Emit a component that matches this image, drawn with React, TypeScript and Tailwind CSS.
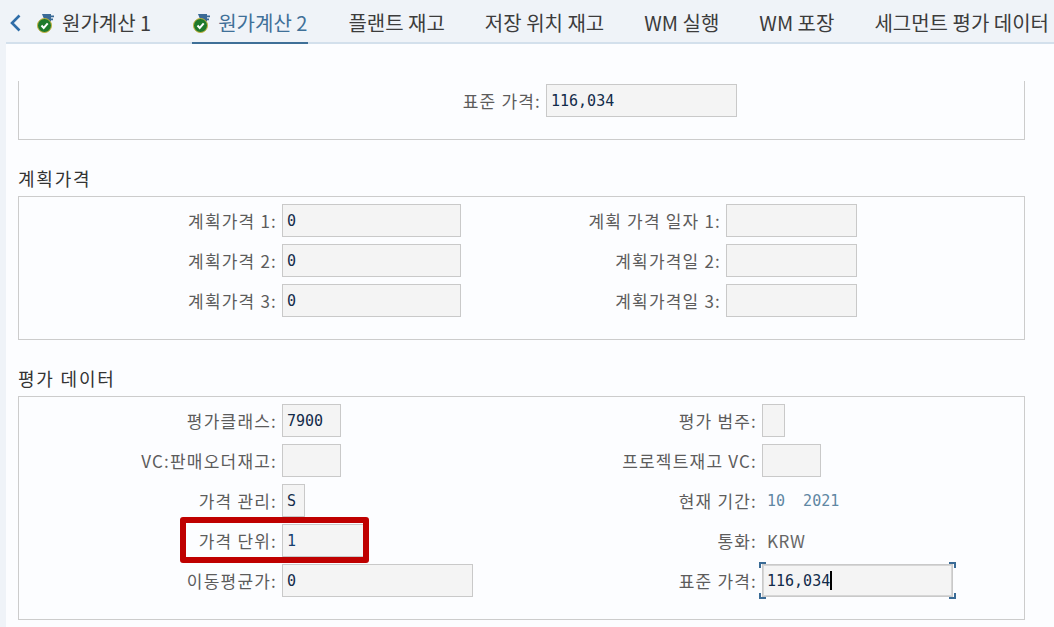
const kr = "font-['Noto_Sans_CJK_KR','Noto_Sans',sans-serif]"
const mono = "font-['DejaVu_Sans_Mono',monospace]"

function TabIcon() {
  return (
    <svg width="18" height="20" viewBox="0 0 18 20" className="shrink-0">
      <path d="M5 1h9v1.6h3v1.6h-3v1.4h2v1.6h-2v1.4H8z" fill="#3a6a96" />
      <circle cx="7.5" cy="12.5" r="7" fill="#1f7a2c" stroke="#c9b23c" strokeWidth="1" />
      <path d="M4.5 12.5l2.2 2.4 4-4.6" fill="none" stroke="#fff" strokeWidth="2" />
    </svg>
  )
}

function Tab({ label, icon, active }: { label: string; icon?: boolean; active?: boolean }) {
  return (
    <div
      className={`flex h-[44px] shrink-0 items-center gap-[7px] whitespace-nowrap border-b-[2px] pt-[3px] text-[20px] ${
        active ? "ml-[1px] border-[#3f7098] px-[1px] text-[#3f7098]" : "border-transparent text-[#3c3c3c]"
      }`}
    >
      {icon && <TabIcon />}
      <span>{label}</span>
    </div>
  )
}

function Field({ value, width, faint, focused }: { value?: string; width: string; faint?: boolean; focused?: boolean }) {
  return (
    <div
      className={`flex h-[33px] items-center border border-[#c9c9c9] bg-[#f4f4f4] pl-[4px] pt-[1px] text-[15px] ${mono} ${width} ${
        faint ? "text-[#16406f]" : "text-[#122b4a]"
      } ${focused ? "inset-ring inset-ring-[#d6d6d6]" : ""}`}
    >
      {value}
    </div>
  )
}

function Label({ text, width }: { text: string; width: string }) {
  return (
    <div
      className={`shrink-0 whitespace-nowrap pr-[5px] text-right text-[17px] tracking-[1.2px] text-[#5c5c5c] ${width}`}
    >
      {text}
    </div>
  )
}

function Section({ title, children, height }: { title: string; children: React.ReactNode; height: string }) {
  return (
    <div className="mt-[25px]">
      <div className="h-[31px] text-[18px] leading-[26px] tracking-[1.8px] text-[#333333]">{title}</div>
      <div className={`flex flex-col gap-[7px] border border-[#cccccc] pt-[7px] ${height}`}>{children}</div>
    </div>
  )
}

function PlanRow({ n, dateLabel }: { n: number; dateLabel: string }) {
  return (
    <div className="flex h-[33px] items-center">
      <Label text={`계획가격 ${n}:`} width="w-[263px]" />
      <Field value="0" width="w-[179px]" />
      <Label text={dateLabel} width="w-[265px]" />
      <Field width="w-[131px]" />
    </div>
  )
}

export default function App() {
  return (
    <div className={`flex h-[627px] w-[1054px] flex-col overflow-hidden bg-[#eff3f8] ${kr}`}>
      {/* Tab bar */}
      <div className="relative flex h-[44px] shrink-0 items-center overflow-hidden">
        <div className="absolute bottom-0 left-[6px] right-0 h-[2px] bg-[#d3e0ec]" />
        <div className="relative flex items-center gap-[40px] pl-[37px]">
          <svg width="14" height="20" viewBox="0 0 14 20" className="absolute left-[8px] top-[13px]">
            <path d="M11.5 2.5L4 10l7.5 7.5" fill="none" stroke="#2f6da8" strokeWidth="2.6" />
          </svg>
          <Tab label="원가계산 1" icon />
          <Tab label="원가계산 2" icon active />
          <Tab label="플랜트 재고" />
          <Tab label="저장 위치 재고" />
          <Tab label="WM 실행" />
          <Tab label="WM 포장" />
          <Tab label="세그먼트 평가 데이터" />
        </div>
      </div>

      {/* Content */}
      <div className="ml-[6px] flex-1 bg-[#fcfdff] pl-[12px] pr-[29px] pt-[37px]">
        <div className="flex h-[59px] border-x border-b border-[#cccccc] pt-[3px]">
          <div className="flex h-[33px] items-center">
            <Label text="표준 가격:" width="w-[527px]" />
            <Field value="116,034" width="w-[191px]" />
          </div>
        </div>

        <Section title="계획가격" height="h-[144px]">
          <PlanRow n={1} dateLabel="계획 가격 일자 1:" />
          <PlanRow n={2} dateLabel="계획가격일 2:" />
          <PlanRow n={3} dateLabel="계획가격일 3:" />
        </Section>

        <Section title="평가 데이터" height="h-[224px]">
          <div className="flex h-[33px] items-center">
            <Label text="평가클래스:" width="w-[263px]" />
            <Field value="7900" width="w-[59px]" />
            <Label text="평가 범주:" width="w-[421px]" />
            <Field width="w-[23px]" />
          </div>
          <div className="flex h-[33px] items-center">
            <Label text="VC:판매오더재고:" width="w-[263px]" />
            <Field width="w-[59px]" />
            <Label text="프로젝트재고 VC:" width="w-[421px]" />
            <Field width="w-[59px]" />
          </div>
          <div className="flex h-[33px] items-center">
            <Label text="가격 관리:" width="w-[263px]" />
            <Field value="S" width="w-[23px]" />
            <Label text="현재 기간:" width="w-[457px]" />
            <div className={`whitespace-pre pl-[5px] pt-[2px] text-[15px] text-[#5f87a3] ${mono}`}>10  2021</div>
          </div>
          <div className="relative flex h-[33px] items-center">
            <Label text="가격 단위:" width="w-[263px]" />
            <Field value="1" width="w-[82px]" faint />
            <Label text="통화:" width="w-[398px]" />
            <div className="pl-[5px] text-[17px] tracking-[0.5px] text-[#666666]">KRW</div>
            {/* Red highlight */}
            <div className="absolute left-[161px] top-[-7px] h-[46px] w-[189px] rounded-[3px] border-[6px] border-[#bf0000]" />
          </div>
          <div className="flex h-[33px] items-center">
            <Label text="이동평균가:" width="w-[263px]" />
            <Field value="0" width="w-[191px]" />
            <Label text="표준 가격:" width="w-[289px]" />
            <div className="relative">
              <Field value="116,034" width="w-[191px]" focused />
              {/* Text caret */}
              <div className="absolute left-[68px] top-[7px] h-[19px] w-[2px] bg-black" />
              {/* Focus corners */}
              <div className="absolute left-[-3px] top-[-2px] h-[6px] w-[7px] border-l-2 border-t-2 border-[#3a6b96]" />
              <div className="absolute right-[-3px] top-[-2px] h-[6px] w-[7px] border-r-2 border-t-2 border-[#3a6b96]" />
              <div className="absolute bottom-[-2px] left-[-3px] h-[6px] w-[7px] border-b-2 border-l-2 border-[#3a6b96]" />
              <div className="absolute bottom-[-2px] right-[-3px] h-[6px] w-[7px] border-b-2 border-r-2 border-[#3a6b96]" />
            </div>
          </div>
        </Section>
      </div>
    </div>
  )
}
